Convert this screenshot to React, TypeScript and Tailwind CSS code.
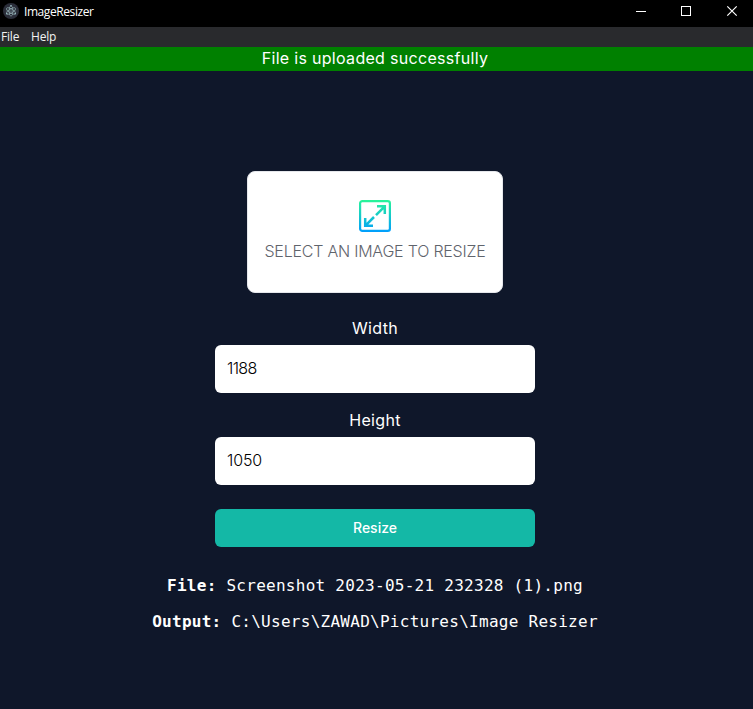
import React from "react";

const ui = "font-['Inter','Liberation_Sans',sans-serif]";
const chrome = "font-['Open_Sans','Noto_Sans',sans-serif]";

function AppLogo() {
  return (
    <svg width="16" height="16" viewBox="0 0 16 16" fill="none" className="shrink-0">
      <circle cx="8" cy="8" r="8" fill="#2b2e3a" />
      <g stroke="#8fa9ae" strokeWidth="0.7">
        <ellipse cx="8" cy="8" rx="5.2" ry="2" transform="rotate(30 8 8)" />
        <ellipse cx="8" cy="8" rx="5.2" ry="2" transform="rotate(90 8 8)" />
        <ellipse cx="8" cy="8" rx="5.2" ry="2" transform="rotate(150 8 8)" />
      </g>
      <g fill="#9fc4c9">
        <circle cx="8" cy="8" r="0.6" />
        <circle cx="3.8" cy="10.8" r="0.8" />
        <circle cx="12.2" cy="10.8" r="0.8" />
        <circle cx="8" cy="2.8" r="0.8" />
      </g>
    </svg>
  );
}

function TitleBar() {
  return (
    <header className={`flex h-[27px] items-start bg-black text-white ${chrome}`}>
      <div className="flex pl-[3px] pt-[3px]">
        <AppLogo />
        <span className="ml-[5px] mt-px text-[12px] leading-4 tracking-[-0.42px]">ImageResizer</span>
      </div>
      <div className="ml-auto flex">
        <svg width="128" height="24" viewBox="0 0 128 24" fill="none" stroke="white" shapeRendering="crispEdges">
          <path d="M11 11.5h10M56.5 6.5h9v9h-9z" />
          <path d="M102.3 6.3l9.4 9.4M111.7 6.3l-9.4 9.4" strokeWidth="1.2" shapeRendering="auto" />
        </svg>
      </div>
    </header>
  );
}

function ResizeIcon() {
  return (
    <svg width="32" height="32" viewBox="0 0 32 32" fill="none" stroke="url(#resize-gradient)" strokeWidth="2.2">
      <defs>
        <linearGradient id="resize-gradient" x1="0" y1="0" x2="0" y2="32" gradientUnits="userSpaceOnUse">
          <stop stopColor="#2af598" />
          <stop offset="1" stopColor="#009efd" />
        </linearGradient>
      </defs>
      <rect x="1.1" y="1.1" width="29.8" height="29.8" rx="2.2" />
      <path d="M18 6.3h7.8v7.8M25.8 6.3l-8.8 8.8M6.2 18v7.8h7.8M6.2 25.8l8.8-8.8" strokeWidth="2.5" />
    </svg>
  );
}

function Field({ label, value, digits }: { label: string; value: string; digits: string }) {
  return (
    <div>
      <label className="block h-6 text-center text-[16px] leading-[22px] tracking-[0.35px] text-white">{label}</label>
      <input
        type="text"
        defaultValue={value}
        className={`mt-1 block h-12 w-full rounded-md bg-white px-3 pb-0.5 text-[16px] font-light text-black outline-none ${digits}`}
      />
    </div>
  );
}

export default function App() {
  return (
    <div className={`flex h-[709px] w-full flex-col overflow-hidden bg-[#0f172a] ${ui}`}>
      <TitleBar />
      <nav className={`flex h-5 bg-[#292a2d] pl-px text-[12px] leading-[19px] tracking-[-0.2px] text-[#f1f1f1] ${chrome}`}>
        <span className="w-[30px]">File</span>
        <span>Help</span>
      </nav>
      <div className="h-6 bg-[#008000] pr-[3px] text-center text-[16px] leading-[22px] tracking-[0.3px] text-white">
        File is uploaded successfully
      </div>
      <main className="flex flex-col items-center pr-[3px] pt-[100px]">
        <div className="flex h-[122px] w-64 flex-col items-center rounded-lg border border-gray-200 bg-white pt-7">
          <ResizeIcon />
          <span className="mt-2 whitespace-nowrap text-[16px] font-light leading-[22px] tracking-[-0.22px] text-[#5f646c]">
            SELECT AN IMAGE TO RESIZE
          </span>
        </div>
        <form className="mt-6 flex w-80 flex-col gap-4">
          <Field label="Width" value="1188" digits="tracking-[-0.65px]" />
          <Field label="Height" value="1050" digits="tracking-[-0.1px]" />
          <button
            type="button"
            className="mt-2 h-[38px] rounded-md bg-[#14b8a6] text-[14px] font-medium leading-5 text-white"
          >
            Resize
          </button>
        </form>
        <div className="mt-[25px] flex flex-col items-center gap-2 whitespace-pre font-['DejaVu_Sans_Mono',monospace] text-[16px] leading-7 tracking-[0.27px] text-white">
          <p><strong>File: </strong>Screenshot 2023-05-21 232328 (1).png</p>
          <p><strong>Output: </strong>C:\Users\ZAWAD\Pictures\Image Resizer</p>
        </div>
      </main>
    </div>
  );
}
